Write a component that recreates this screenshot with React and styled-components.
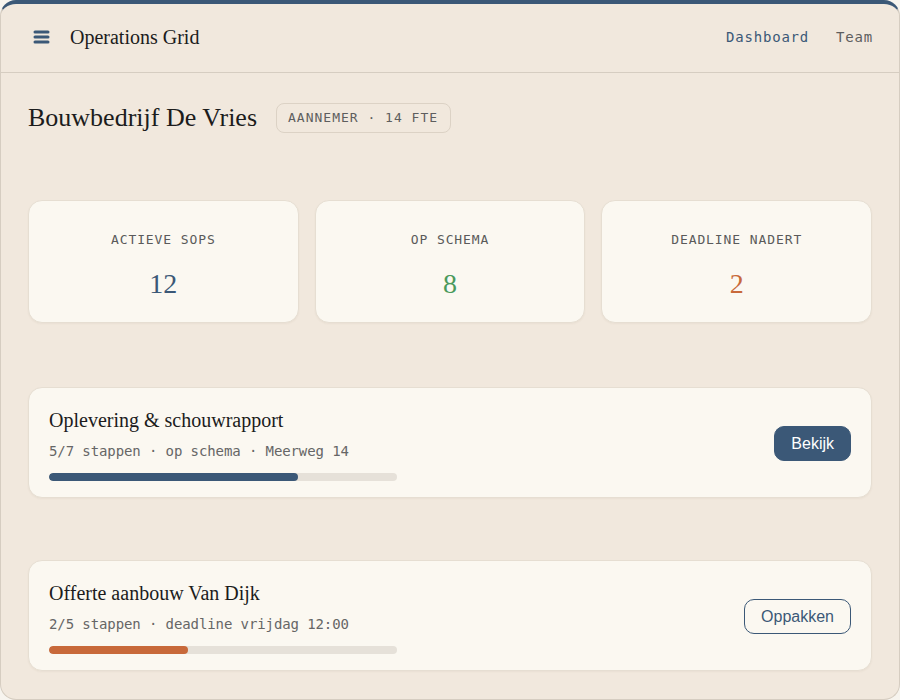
import styled, { createGlobalStyle } from "styled-components";

const GlobalStyle = createGlobalStyle`
  html, body {
    margin: 0;
    padding: 0;
    background: #f7f4ee;
  }
  * {
    box-sizing: border-box;
  }
`;

const Frame = styled.div`
  width: 900px;
  height: 700px;
  background: #f1e8dd;
  border: 1px solid #d6cdc1;
  border-top: 4px solid #3b5877;
  border-radius: 16px;
  overflow: hidden;
  display: flex;
  flex-direction: column;
  font-family: "Liberation Serif", serif;
  color: #1f1f1f;
`;

const Header = styled.header`
  height: 69px;
  display: flex;
  align-items: center;
  justify-content: space-between;
  padding: 0 26px 2px 32px;
  border-bottom: 1px solid #d6cdc1;
`;

const Brand = styled.div`
  display: flex;
  align-items: center;
  gap: 20px;
`;

const BrandTitle = styled.span`
  font-size: 20px;
  color: #1c1c1c;
`;

const NavList = styled.nav`
  display: flex;
  gap: 27px;
`;

const NavLink = styled.a`
  font-family: "DejaVu Sans Mono", monospace;
  font-size: 14px;
  letter-spacing: 0.8px;
  text-decoration: none;
  color: ${(p) => (p.$active ? "#3b5877" : "#5e5e5e")};
`;

const Main = styled.main`
  padding: 27px 27px 0 27px;
  display: flex;
  flex-direction: column;
  gap: 64px;
`;

const TitleRow = styled.div`
  display: flex;
  align-items: center;
  gap: 19px;
  height: 36px;
`;

const PageTitle = styled.h1`
  margin: 0;
  font-weight: normal;
  font-size: 26px;
  color: #1c1c1c;
`;

const Badge = styled.span`
  font-family: "DejaVu Sans Mono", monospace;
  font-size: 13px;
  letter-spacing: 1px;
  color: #5e5e5e;
  border: 1.5px solid #dcd2c5;
  border-radius: 8px;
  padding: 6px 12px 6px 11px;
  line-height: 16px;
`;

const Stats = styled.div`
  display: grid;
  grid-template-columns: repeat(3, 1fr);
  gap: 16px;
`;

const Card = styled.div`
  background: #fbf8f1;
  border: 1px solid #e6ded2;
  border-radius: 14px;
  box-shadow: 0 1px 2px rgba(90, 70, 40, 0.05);
`;

const StatCard = styled(Card)`
  height: 123px;
  display: flex;
  flex-direction: column;
  align-items: center;
  padding-top: 30px;
  gap: 18px;
`;

const StatLabel = styled.div`
  font-family: "DejaVu Sans Mono", monospace;
  font-size: 13px;
  letter-spacing: 0.9px;
  line-height: 18px;
  color: #5a5a5a;
`;

const StatValue = styled.div`
  font-size: 28px;
  line-height: 34px;
  color: ${(p) => p.$color};
`;

const TaskList = styled.div`
  display: flex;
  flex-direction: column;
  gap: 62px;
`;

const TaskCard = styled(Card)`
  height: 111px;
  display: flex;
  align-items: center;
  justify-content: space-between;
  padding: 20px 20px 16px 20px;
`;

const TaskInfo = styled.div`
  display: flex;
  flex-direction: column;
`;

const TaskTitle = styled.div`
  font-size: 20px;
  line-height: 24px;
  color: #1c1c1c;
`;

const TaskMeta = styled.div`
  font-family: "DejaVu Sans Mono", monospace;
  font-size: 14px;
  letter-spacing: -0.1px;
  line-height: 18px;
  color: #666;
  margin-top: 10px;
`;

const Track = styled.div`
  width: 348px;
  height: 8px;
  border-radius: 4px;
  background: #e6e1d9;
  margin-top: 13px;
  overflow: hidden;
`;

const Fill = styled.div`
  height: 100%;
  border-radius: 4px;
  background: ${(p) => p.$color};
`;

const Button = styled.button`
  font-family: "Liberation Sans", Arial, sans-serif;
  font-size: 16px;
  line-height: 19px;
  padding: 7px 16px;
  border-radius: 10px;
  border: 1.5px solid #3b5877;
  background: ${(p) => (p.$primary ? "#3b5877" : "#fbf8f1")};
  color: ${(p) => (p.$primary ? "#fff" : "#3b5877")};
  cursor: pointer;
  margin-bottom: 2px;
`;

const MenuIcon = () => (
  <svg width="17" height="14" viewBox="0 0 17 14" fill="none">
    <rect x="0.5" y="0.5" width="16" height="3" rx="1.5" fill="#3b5877" />
    <rect x="0.5" y="5.5" width="16" height="3" rx="1.5" fill="#3b5877" />
    <rect x="0.5" y="10.5" width="16" height="3" rx="1.5" fill="#3b5877" />
  </svg>
);

const stats = [
  { label: "ACTIEVE SOPS", value: 12, color: "#3b5877" },
  { label: "OP SCHEMA", value: 8, color: "#4a9a5c" },
  { label: "DEADLINE NADERT", value: 2, color: "#c8693a" },
];

const tasks = [
  {
    title: "Oplevering & schouwrapport",
    meta: "5/7 stappen · op schema · Meerweg 14",
    done: 5,
    total: 7,
    color: "#3b5877",
    action: "Bekijk",
    primary: true,
  },
  {
    title: "Offerte aanbouw Van Dijk",
    meta: "2/5 stappen · deadline vrijdag 12:00",
    done: 2,
    total: 5,
    color: "#c8693a",
    action: "Oppakken",
    primary: false,
  },
];

function App() {
  return (
    <>
      <GlobalStyle />
      <Frame>
        <Header>
          <Brand>
            <MenuIcon />
            <BrandTitle>Operations Grid</BrandTitle>
          </Brand>
          <NavList>
            <NavLink href="#" $active>
              Dashboard
            </NavLink>
            <NavLink href="#">Team</NavLink>
          </NavList>
        </Header>
        <Main>
          <TitleRow>
            <PageTitle>Bouwbedrijf De Vries</PageTitle>
            <Badge>AANNEMER · 14 FTE</Badge>
          </TitleRow>
          <Stats>
            {stats.map((s) => (
              <StatCard key={s.label}>
                <StatLabel>{s.label}</StatLabel>
                <StatValue $color={s.color}>{s.value}</StatValue>
              </StatCard>
            ))}
          </Stats>
          <TaskList>
            {tasks.map((t) => (
              <TaskCard key={t.title}>
                <TaskInfo>
                  <TaskTitle>{t.title}</TaskTitle>
                  <TaskMeta>{t.meta}</TaskMeta>
                  <Track>
                    <Fill
                      $color={t.color}
                      style={{ width: `${(t.done / t.total) * 100}%` }}
                    />
                  </Track>
                </TaskInfo>
                <Button $primary={t.primary}>{t.action}</Button>
              </TaskCard>
            ))}
          </TaskList>
        </Main>
      </Frame>
    </>
  );
}

export default App;
